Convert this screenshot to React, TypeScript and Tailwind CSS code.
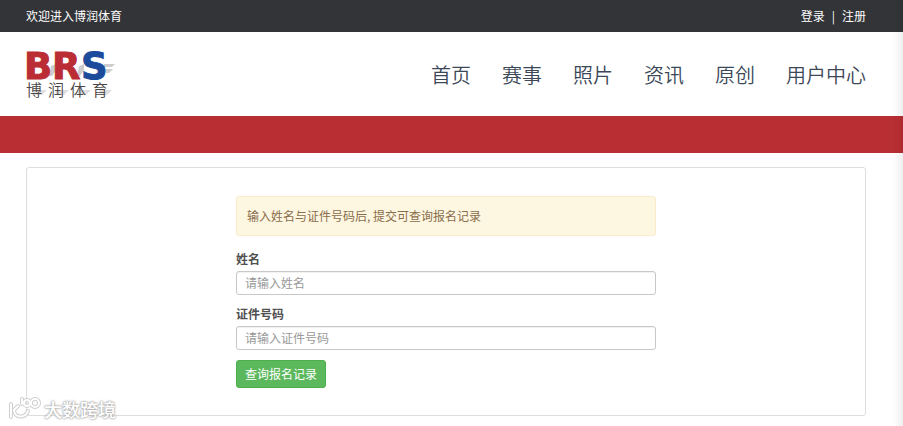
import React from "react";

const navItems = ["首页", "赛事", "照片", "资讯", "原创", "用户中心"];

function Logo() {
  return (
    <a href="#" aria-label="BRS 博润体育" className="-ml-[4px] block">
      <svg width="94" height="58" viewBox="0 0 94 58" className="block">
        <g fill="#cdcdd0">
          <path d="M82 19h11l-3 3h-8zM84 24h7l-4 4h-3zM29 21l5-2v6l-4 6h-3zM57 21l5-2v6l-4 6h-3z" />
        </g>
        <g fill="#dfdfe1">
          <path d="M10 45h15l-5 5H12zM33 45h14l-5 5h-8zM55 45h14l-5 5h-8zM77 45h13l-5 5h-7z" />
        </g>
        <g fontFamily="'DejaVu Sans', sans-serif" fontWeight="700" fontSize="37" strokeWidth="1">
          <text x="2" y="34" fill="#bb2d35" stroke="#bb2d35">B</text>
          <text x="30" y="34" fill="#bb2d35" stroke="#bb2d35">R</text>
          <text x="59" y="34" fill="#1c4b9c" stroke="#1c4b9c">S</text>
        </g>
        <g fontFamily="'Noto Sans CJK SC', sans-serif" fontSize="16" fontWeight="350" fill="#4b4747">
          <text x="4" y="51">博</text>
          <text x="26" y="51">润</text>
          <text x="48" y="51">体</text>
          <text x="70" y="51">育</text>
        </g>
      </svg>
    </a>
  );
}

function Field({ id, label, placeholder }: { id: string; label: string; placeholder: string }) {
  return (
    <div className="mb-[10px]">
      <label htmlFor={id} className="mb-1 block text-xs leading-[17px] font-bold text-[#505050]">
        {label}
      </label>
      <input
        id={id}
        type="text"
        placeholder={placeholder}
        className="block h-6 w-full rounded-[3px] border border-[#c8c8c8] bg-white px-2 pb-[2px] text-xs text-[#555] shadow-[inset_0_1px_1px_rgba(0,0,0,0.06)] outline-none placeholder:text-[#999] focus:border-[#66afe9]"
      />
    </div>
  );
}

function WatermarkMark() {
  return (
    <>
      <path d="M3 8v13M10 10l-4 4c0 8 11 9 14 1" />
      <path d="M14 3v5" />
      <circle cx="19" cy="7" r="3" />
      <circle cx="27" cy="7" r="4" />
    </>
  );
}

function Watermark() {
  return (
    <div className="pointer-events-none absolute top-[396px] left-[8px] flex items-center gap-[2px]">
      <svg
        width="34"
        height="26"
        viewBox="0 0 34 26"
        fill="none"
        strokeLinecap="round"
        strokeLinejoin="round"
      >
        <g stroke="#cfcfcf" strokeWidth="4">
          <WatermarkMark />
        </g>
        <g stroke="#fff" strokeWidth="2">
          <WatermarkMark />
        </g>
      </svg>
      <span className="text-lg leading-[26px] font-medium text-white [text-shadow:0_0_2px_#aaa,0_0_2px_#aaa,0_0_3px_#ccc]">
        大数跨境
      </span>
    </div>
  );
}

export default function App() {
  return (
    <div className="relative min-h-screen bg-white font-['Noto_Sans_CJK_SC',sans-serif]">
      <div className="flex h-8 items-center justify-between bg-[#333438] pr-[37px] pl-[26px] text-xs text-white">
        <span>欢迎进入博润体育</span>
        <div className="flex items-center gap-[7px]">
          <a href="#">登录</a>
          <span>|</span>
          <a href="#">注册</a>
        </div>
      </div>

      <header className="flex h-[84px] items-center justify-between pr-[37px] pl-[26px]">
        <Logo />
        <nav className="flex gap-[31px] pt-[2px] text-xl font-[350] text-[#3c4858]">
          {navItems.map((item) => (
            <a key={item} href="#">
              {item}
            </a>
          ))}
        </nav>
      </header>

      <div className="h-[37px] bg-[#b82e33]" />

      <main className="pt-[14px] pr-[37px] pb-[10px] pl-[26px]">
        <section className="rounded-[3px] border border-[#ddd] pt-7 pb-[27px]">
          <form className="mx-auto w-full max-w-[420px]" onSubmit={(e) => e.preventDefault()}>
            <div className="mb-[14px] rounded-[3px] border border-[#faebcc] bg-[#fdf7e2] px-[10px] py-[10px] text-xs leading-[18px] text-[#8a6d4b]">
              输入姓名与证件号码后, 提交可查询报名记录
            </div>
            <Field id="name" label="姓名" placeholder="请输入姓名" />
            <Field id="idno" label="证件号码" placeholder="请输入证件号码" />
            <button
              type="submit"
              className="h-7 rounded-[3px] border border-[#4cae4c] bg-[#5cb85c] px-2 text-xs text-white"
            >
              查询报名记录
            </button>
          </form>
        </section>
      </main>

      <div className="pointer-events-none absolute inset-y-0 right-0 w-[10px] bg-linear-to-r from-transparent to-black/6" />
      <Watermark />
    </div>
  );
}
